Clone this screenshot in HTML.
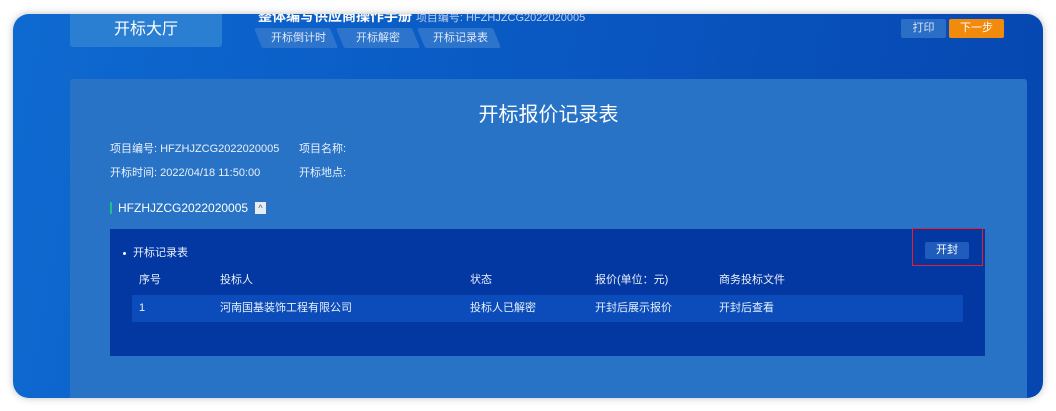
<!DOCTYPE html><html><head><meta charset="utf-8"><style>
*{margin:0;padding:0;box-sizing:border-box}
body{width:1056px;height:411px;background:#fff;position:relative;overflow:hidden;font-family:"Liberation Sans","Noto Sans CJK SC",sans-serif;color:#fff}
.a{position:absolute}
#outer{left:13px;top:14px;width:1030px;height:384px;border-radius:16px;background:linear-gradient(100deg,#0e6ad0 0%,#0a58c2 50%,#0646b0 100%);overflow:hidden;box-shadow:0 0 8px rgba(0,0,0,.25)}
.tab{position:absolute;top:14px;height:20px;width:76px;background:#2c74cc;transform:skewX(22deg);border-radius:2px}
.tt{position:absolute;top:17px;font-size:11px;line-height:14px;color:#dfe9f8}
.f11{font-size:11px;line-height:14px;color:#e8f0fa}
</style></head><body>
<div id="outer" class="a">
 <div class="a" style="left:57px;top:-4px;width:152px;height:37px;background:#2b7fd3;border-radius:3px"></div>
 <div class="a" style="left:57px;top:6px;width:152px;text-align:center;font-size:16px;line-height:20px">开标大厅</div>
 <div class="a" style="left:245px;top:-8px;font-size:14px;font-weight:bold;white-space:nowrap">整体编写供应商操作手册 <span style="font-weight:normal;font-size:11px;color:#b9cff0">项目编号: HFZHJZCG2022020005</span></div>
 <div class="tab" style="left:245px"></div>
 <div class="tab" style="left:327px"></div>
 <div class="tab" style="left:408px"></div>
 <div class="tt" style="left:258px">开标倒计时</div>
 <div class="tt" style="left:343px">开标解密</div>
 <div class="tt" style="left:420px">开标记录表</div>
 <div class="a" style="left:888px;top:5px;width:45px;height:19px;background:#2a6ec6;border-radius:2px;font-size:11px;text-align:center;line-height:19px;color:#d8e4f5">打印</div>
 <div class="a" style="left:936px;top:5px;width:55px;height:19px;background:#f28a0c;border-radius:2px;font-size:11px;text-align:center;line-height:19px">下一步</div>
 <div class="a" style="left:57px;top:65px;width:957px;height:330px;background:#2873c6;border-radius:3px"></div>
</div>
<div class="a" style="left:70px;top:102px;width:957px;text-align:center;font-size:20px;line-height:26px">开标报价记录表</div>
<div class="a f11" style="left:110px;top:142px">项目编号: HFZHJZCG2022020005</div>
<div class="a f11" style="left:299px;top:142px">项目名称:</div>
<div class="a f11" style="left:110px;top:166px">开标时间: 2022/04/18 11:50:00</div>
<div class="a f11" style="left:299px;top:166px">开标地点:</div>
<div class="a" style="left:110px;top:202px;width:2px;height:12px;background:#1fc08a"></div>
<div class="a" style="left:118px;top:200px;font-size:12px;line-height:16px">HFZHJZCG2022020005</div>
<div class="a" style="left:255px;top:202px;width:11px;height:12px;background:#e6ecf4;color:#555;font-size:9px;text-align:center;line-height:12px">^</div>
<div class="a" style="left:110px;top:229px;width:875px;height:127px;background:#0337a2"></div>
<div class="a" style="left:123px;top:252px;width:3px;height:3px;border-radius:50%;background:#fff"></div>
<div class="a f11" style="left:133px;top:246px">开标记录表</div>
<div class="a" style="left:925px;top:242px;width:44px;height:17px;background:#1f5cbc;border-radius:2px;font-size:11px;text-align:center;line-height:17px">开封</div>
<div class="a" style="left:912px;top:228px;width:71px;height:38px;border:1.5px solid #e8202a"></div>
<div class="a f11" style="left:139px;top:273px">序号</div>
<div class="a f11" style="left:220px;top:273px">投标人</div>
<div class="a f11" style="left:470px;top:273px">状态</div>
<div class="a f11" style="left:595px;top:273px">报价(单位：元)</div>
<div class="a f11" style="left:719px;top:273px">商务投标文件</div>
<div class="a" style="left:132px;top:295px;width:831px;height:27px;background:#0b4cba"></div>
<div class="a f11" style="left:139px;top:301px">1</div>
<div class="a f11" style="left:220px;top:301px">河南国基装饰工程有限公司</div>
<div class="a f11" style="left:470px;top:301px">投标人已解密</div>
<div class="a f11" style="left:595px;top:301px">开封后展示报价</div>
<div class="a f11" style="left:719px;top:301px">开封后查看</div>
</body></html>
